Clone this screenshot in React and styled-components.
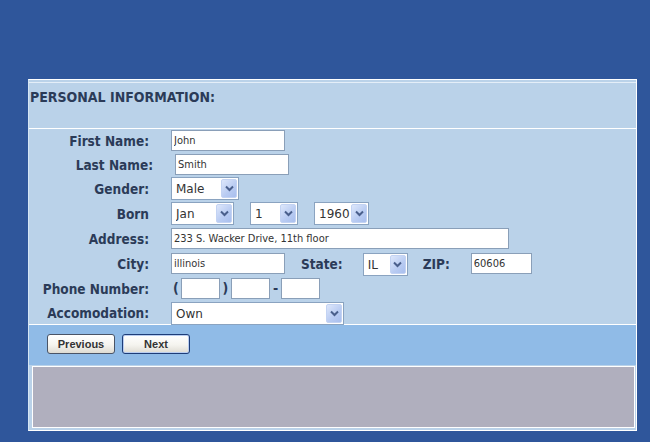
import React from "react";
import styled, { createGlobalStyle } from "styled-components";

const GlobalStyle = createGlobalStyle`
  html, body {
    margin: 0;
    padding: 0;
    background: #2f569b;
  }
  body {
    font-family: "DejaVu Sans", Verdana, sans-serif;
  }
`;

const Page = styled.div`
  width: 650px;
  height: 442px;
  box-sizing: border-box;
  padding: 79px 0 0 28px;
`;

const Panel = styled.div`
  width: 609px;
  box-sizing: border-box;
  background: #bad2e9;
  border: 1px solid #fff;
  border-left-color: #d6e5f3;
`;

const Header = styled.div`
  height: 47px;
  margin-top: 2px;
  border-top: 1px solid #e4eef8;
  border-bottom: 1px solid #fff;
  padding: 6px 0 0 1px;
  box-sizing: border-box;
  font-family: "DejaVu Sans Condensed", "DejaVu Sans", sans-serif;
  font-weight: bold;
  font-size: 14px;
  color: #2b3b58;
`;

const Form = styled.div`
  padding-top: 1px;
  border-bottom: 1px solid #fff;
`;

const Row = styled.div`
  display: flex;
  align-items: flex-start;
  height: ${(p) => p.h}px;
  padding-left: ${(p) => p.shift || 0}px;
`;

const Label = styled.label`
  width: 120px;
  margin-right: 22px;
  text-align: right;
  font-family: "DejaVu Sans Condensed", "DejaVu Sans", sans-serif;
  font-weight: bold;
  font-size: 13.5px;
  line-height: ${(p) => p.lh || 22}px;
  color: #2b3b58;
  white-space: nowrap;
`;

const InlineLabel = styled(Label)`
  width: auto;
  margin: 0 ${(p) => p.after}px 0 ${(p) => p.before}px;
  text-align: left;
`;

const TextBox = styled.input`
  width: ${(p) => p.w}px;
  height: 21px;
  box-sizing: border-box;
  margin: 0;
  padding: 0 2px;
  border: 1px solid #8a9fb8;
  background: #fff;
  font-family: "DejaVu Sans Condensed", "DejaVu Sans", sans-serif;
  font-size: 11px;
  color: #333;
  outline: none;
`;

const SelectWrap = styled.div`
  position: relative;
  width: ${(p) => p.w}px;
  height: 23px;
  margin-left: ${(p) => p.ml || 0}px;
`;

const NativeSelect = styled.select`
  appearance: none;
  -webkit-appearance: none;
  width: 100%;
  height: 100%;
  box-sizing: border-box;
  margin: 0;
  padding: 0 0 0 4px;
  border: 1px solid #8aa3c0;
  border-radius: 0;
  background: #fff;
  font-family: "DejaVu Sans", sans-serif;
  font-size: 12px;
  color: #333;
  outline: none;
`;

const ArrowBtn = styled.span`
  position: absolute;
  top: 2px;
  right: 2px;
  width: 16px;
  height: 19px;
  display: flex;
  align-items: center;
  justify-content: center;
  box-sizing: border-box;
  border: 1px solid #c3d3f3;
  border-radius: 2px;
  background: linear-gradient(135deg, #dde7fb 0%, #b8cbf2 60%, #a9bfee 100%);
  pointer-events: none;
`;

const Paren = styled.span`
  font-family: "DejaVu Sans Condensed", "DejaVu Sans", sans-serif;
  font-weight: bold;
  font-size: 14px;
  line-height: 21px;
  color: #2b3b58;
  width: ${(p) => p.w}px;
  text-align: center;
`;

const ButtonBar = styled.div`
  height: 40px;
  background: #90bbe7;
  display: flex;
  gap: 7px;
  padding: 9px 0 0 18px;
  box-sizing: border-box;
`;

const Button = styled.button`
  width: 68px;
  height: 20px;
  margin: 0;
  padding: 0;
  border: 1px solid ${(p) => (p.primary ? "#1e3d78" : "#4a5466")};
  border-radius: 3px;
  background: linear-gradient(#ffffff 0%, #f5f4ef 55%, #dedbd2 100%);
  box-shadow: ${(p) => (p.primary ? "inset 0 0 0 1px #b9cdf0" : "none")};
  font-family: "Liberation Sans", Arial, sans-serif;
  font-weight: bold;
  font-size: 11px;
  color: #333;
  cursor: pointer;
`;

const Footer = styled.div`
  padding: 1px 1px 2px 3px;
`;

const Notes = styled.div`
  height: 62px;
  box-sizing: border-box;
  background: #b0afbe;
  border: 1px solid #fff;
`;

const Chevron = () => (
  <svg width="9" height="7" viewBox="0 0 9 7">
    <path d="M1 1.5 L4.5 5 L8 1.5" fill="none" stroke="#4a5f8c" strokeWidth="2" />
  </svg>
);

const Dropdown = ({ w, ml, value, options }) => (
  <SelectWrap w={w} ml={ml}>
    <NativeSelect defaultValue={value}>
      {options.map((o) => (
        <option key={o}>{o}</option>
      ))}
    </NativeSelect>
    <ArrowBtn>
      <Chevron />
    </ArrowBtn>
  </SelectWrap>
);

const months = ["Jan", "Feb", "Mar", "Apr", "May", "Jun", "Jul", "Aug", "Sep", "Oct", "Nov", "Dec"];
const days = Array.from({ length: 31 }, (_, i) => String(i + 1));
const years = Array.from({ length: 60 }, (_, i) => String(1930 + i));

export default function App() {
  return (
    <>
      <GlobalStyle />
      <Page>
        <Panel>
          <Header>PERSONAL INFORMATION:</Header>
          <Form>
            <Row h={24}>
              <Label>First Name:</Label>
              <TextBox w={114} defaultValue="John" />
            </Row>
            <Row h={23} shift={4}>
              <Label>Last Name:</Label>
              <TextBox w={114} defaultValue="Smith" />
            </Row>
            <Row h={25}>
              <Label lh={24}>Gender:</Label>
              <Dropdown w={68} value="Male" options={["Male", "Female"]} />
            </Row>
            <Row h={26}>
              <Label lh={24}>Born</Label>
              <Dropdown w={63} value="Jan" options={months} />
              <Dropdown w={48} ml={16} value="1" options={days} />
              <Dropdown w={55} ml={16} value="1960" options={years} />
            </Row>
            <Row h={25}>
              <Label>Address:</Label>
              <TextBox w={338} defaultValue="233 S. Wacker Drive, 11th floor" />
            </Row>
            <Row h={25}>
              <Label>City:</Label>
              <TextBox w={114} defaultValue="illinois" />
              <InlineLabel before={16} after={20}>State:</InlineLabel>
              <Dropdown w={45} value="IL" options={["IL", "IN", "WI"]} />
              <InlineLabel before={15} after={21}>ZIP:</InlineLabel>
              <TextBox w={61} defaultValue="60606" />
            </Row>
            <Row h={24}>
              <Label>Phone Number:</Label>
              <Paren w={10}>(</Paren>
              <TextBox w={39} />
              <Paren w={11}>)</Paren>
              <TextBox w={39} />
              <Paren w={11}>-</Paren>
              <TextBox w={39} />
            </Row>
            <Row h={22}>
              <Label lh={23}>Accomodation:</Label>
              <Dropdown w={173} value="Own" options={["Own", "Rent", "Other"]} />
            </Row>
          </Form>
          <ButtonBar>
            <Button>Previous</Button>
            <Button primary>Next</Button>
          </ButtonBar>
          <Footer>
            <Notes />
          </Footer>
        </Panel>
      </Page>
    </>
  );
}
